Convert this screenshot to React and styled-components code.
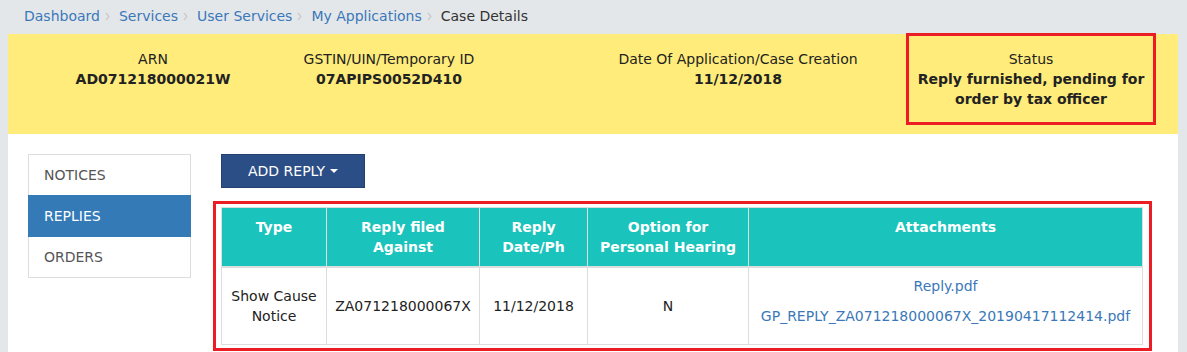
import React from "react";
import styled, { createGlobalStyle } from "styled-components";

const Global = createGlobalStyle`
  html, body { margin: 0; padding: 0; background: #e4e7ea; }
  body { font-family: "DejaVu Sans", Verdana, sans-serif; font-size: 14px; line-height: 20px; color: #333; }
  * { box-sizing: border-box; }
`;

const Page = styled.div`
  width: 1187px;
  height: 352px;
  overflow: hidden;
  background: #e4e7ea;
  padding: 0 9px 0 8px;
`;

const Crumbs = styled.nav`
  display: flex;
  align-items: center;
  height: 34px;
  padding: 0 16px 2px;
`;

const Crumb = styled.a`
  color: ${(p) => (p.$current ? "#333" : "#3a78b9")};
  text-decoration: none;
`;

const Sep = styled.svg`
  width: 5px;
  height: 9px;
  margin: 1px 9px 0 5px;
`;

const Banner = styled.section`
  display: flex;
  background: #ffec7a;
  padding: 0 0 9px;
  height: 100px;
`;

const Field = styled.div`
  width: ${(p) => p.$w}px;
  margin-left: ${(p) => p.$ml || 0}px;
  margin-top: -1px;
  padding: 13px 4px 12px;
  border: 3px solid ${(p) => (p.$marked ? "#ec1c24" : "transparent")};
  text-align: center;
  color: #222;
  white-space: ${(p) => (p.$marked ? "normal" : "nowrap")};
  display: flex;
  flex-direction: column;
  align-items: center;
`;

const Label = styled.div``;

const Value = styled.div`
  font-weight: bold;
`;

const Body = styled.section`
  background: #fff;
  height: 218px;
  display: flex;
  gap: 30px;
  padding: 20px 0 0 20px;
`;

const SideNav = styled.ul`
  list-style: none;
  margin: 0;
  padding: 0;
  width: 163px;
  flex: none;
`;

const NavItem = styled.li`
  padding: 10px 15px;
  border: 1px solid ${(p) => (p.$active ? "#337ab7" : "#ddd")};
  margin-bottom: -1px;
  background: ${(p) => (p.$active ? "#337ab7" : "#fff")};
  color: ${(p) => (p.$active ? "#fff" : "#555")};
  position: relative;
  z-index: ${(p) => (p.$active ? 1 : 0)};
`;

const Main = styled.div`
  display: flex;
  flex-direction: column;
  align-items: flex-start;
`;

const DropButton = styled.button`
  display: inline-flex;
  align-items: center;
  height: 34px;
  padding: 6px 26px;
  background: #2c4e86;
  border: 1px solid #24406f;
  color: #fff;
  font: inherit;
  line-height: 20px;
`;

const Caret = styled.span`
  display: inline-block;
  margin-left: 5px;
  width: 0;
  height: 0;
  border-top: 4px solid #fff;
  border-left: 4px solid transparent;
  border-right: 4px solid transparent;
`;

const Marked = styled.div`
  margin: 13px 0 0 -8px;
  border: 3px solid #ec1c24;
  padding: 3px 6px 3px 5px;
`;

const Table = styled.table`
  border-collapse: collapse;
  table-layout: fixed;
  width: 921px;
`;

const Th = styled.th`
  background: #1ac3bb;
  color: #fff;
  font-weight: bold;
  padding: 9px 8px 7px;
  vertical-align: top;
  text-align: center;
  border: 1px solid #ddd;
  border-bottom-width: 2px;
  height: 59px;
`;

const Td = styled.td`
  padding: 8px;
  text-align: center;
  vertical-align: middle;
  border: 1px solid #ddd;
  color: #222;
`;

const FileLink = styled.a`
  display: block;
  margin-bottom: 10px;
  color: #3a78b9;
  text-decoration: none;
  white-space: nowrap;
`;

const cols = [105, 153, 108, 161, 394];

export default function App() {
  const crumbs = ["Dashboard", "Services", "User Services", "My Applications"];
  return (
    <>
      <Global />
      <Page>
        <Crumbs>
          {crumbs.map((c) => (
            <React.Fragment key={c}>
              <Crumb href="#">{c}</Crumb>
              <Sep viewBox="0 0 5 9">
                <polyline points="1,1 4,4.5 1,8" fill="none" stroke="#c9c9c9" strokeWidth="1.2" />
              </Sep>
            </React.Fragment>
          ))}
          <Crumb $current>Case Details</Crumb>
        </Crumbs>
        <Banner>
          <Field $w={290}>
            <Label>ARN</Label>
            <Value>AD071218000021W</Value>
          </Field>
          <Field $w={182}>
            <Label>GSTIN/UIN/Temporary ID</Label>
            <Value>07APIPS0052D410</Value>
          </Field>
          <Field $w={336} $ml={90}>
            <Label>Date Of Application/Case Creation</Label>
            <Value>11/12/2018</Value>
          </Field>
          <Field $w={250} $marked>
            <Label>Status</Label>
            <Value>Reply furnished, pending for order by tax officer</Value>
          </Field>
        </Banner>
        <Body>
          <SideNav>
            <NavItem>NOTICES</NavItem>
            <NavItem $active>REPLIES</NavItem>
            <NavItem>ORDERS</NavItem>
          </SideNav>
          <Main>
            <DropButton>
              ADD REPLY
              <Caret />
            </DropButton>
            <Marked>
              <Table>
                <colgroup>
                  {cols.map((w, i) => (
                    <col key={i} style={{ width: w }} />
                  ))}
                </colgroup>
                <thead>
                  <tr>
                    <Th>Type</Th>
                    <Th>Reply filed Against</Th>
                    <Th>Reply Date/Ph</Th>
                    <Th>Option for Personal Hearing</Th>
                    <Th>Attachments</Th>
                  </tr>
                </thead>
                <tbody>
                  <tr>
                    <Td>Show Cause Notice</Td>
                    <Td>ZA071218000067X</Td>
                    <Td>11/12/2018</Td>
                    <Td>N</Td>
                    <Td>
                      <FileLink href="#">Reply.pdf</FileLink>
                      <FileLink href="#">GP_REPLY_ZA071218000067X_20190417112414.pdf</FileLink>
                    </Td>
                  </tr>
                </tbody>
              </Table>
            </Marked>
          </Main>
        </Body>
      </Page>
    </>
  );
}
